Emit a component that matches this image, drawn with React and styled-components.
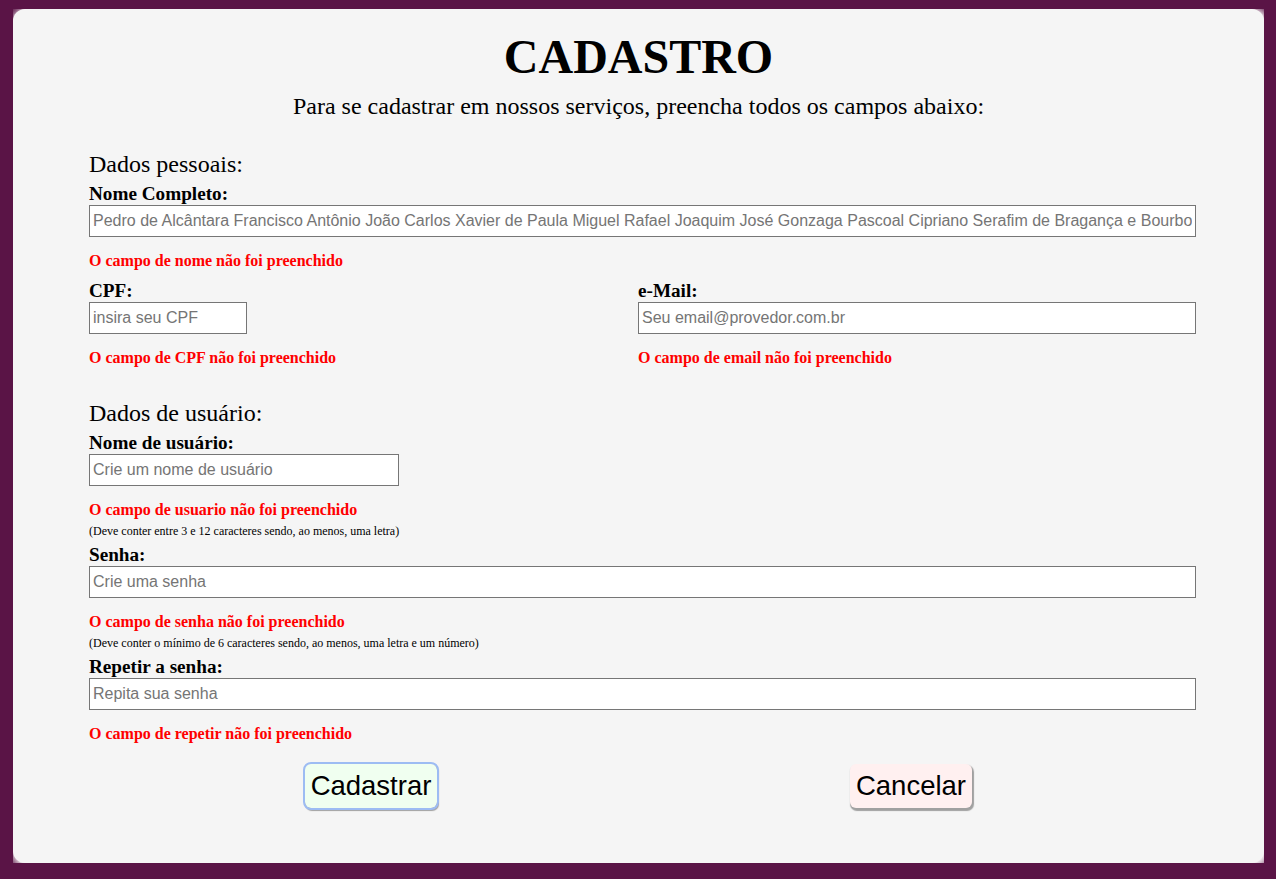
import styled, { createGlobalStyle } from "styled-components";

const GlobalStyle = createGlobalStyle`
  html, body {
    background-color: #5a1446;
  }
  body {
    margin: 9px 12px 16px 13px;
    font-family: "Liberation Serif", "Times New Roman", serif;
  }
`;

const Card = styled.main`
  box-sizing: border-box;
  height: 854px;
  padding: 21px 68px 0 68px;
  background-color: #f5f5f5;
  border-radius: 12px;
  box-shadow: 2px 2px 8px 3px #ffffff;
`;

const Title = styled.h1`
  margin: 0;
  font-size: 48px;
  line-height: 53px;
  font-weight: bold;
  text-align: center;
  color: black;
`;

const Subtitle = styled.p`
  margin: 10px 0 0 0;
  font-size: 24px;
  line-height: 27px;
  text-align: center;
  color: black;
`;

const Form = styled.form`
  padding-left: 8px;
`;

const Section = styled.h2`
  margin: ${(p) => p.$top}px 0 0 0;
  font-size: 24px;
  line-height: 27px;
  font-weight: normal;
  color: black;
`;

const Row = styled.div`
  display: grid;
  grid-template-columns: 549px 1fr;
`;

const Field = styled.div`
  display: flex;
  flex-direction: column;
  align-items: flex-start;
  margin-top: ${(p) => p.$top}px;
`;

const Label = styled.label`
  display: block;
  margin-bottom: 1px;
  font-size: 19.2px;
  line-height: 21px;
  font-weight: bold;
  color: black;
`;

const Input = styled.input`
  box-sizing: border-box;
  width: ${(p) => p.$width || "100%"};
  height: 32px;
  padding: 0 3px;
  border: 1px solid #767676;
  background: white;
  font-family: "Liberation Sans", Arial, sans-serif;
  font-size: 16px;
  color: black;
  outline: none;

  &::placeholder {
    color: #757575;
  }
`;

const Error = styled.span`
  margin-top: 15px;
  font-size: 16px;
  line-height: 18px;
  font-weight: bold;
  color: #ff0000;
`;

const Hint = styled.small`
  margin-top: 5px;
  font-size: 12px;
  line-height: 14px;
  color: black;
`;

const Buttons = styled.div`
  display: grid;
  grid-template-columns: 1fr 1fr;
  justify-items: center;
  padding: 0 15px 0 12px;
  margin-top: 21px;
`;

const Button = styled.button`
  height: 44px;
  padding: 0 6px;
  border: none;
  border-radius: 6px;
  background-color: ${(p) => p.$bg};
  box-shadow: 1px 2px 1px 1px #a0a0a0;
  font-family: "Liberation Sans", Arial, sans-serif;
  font-size: 27.5px;
  color: black;
  cursor: pointer;
  outline: ${(p) => (p.$focused ? "2px solid #9dbcf3" : "none")};
  outline-offset: 0;
`;

export default function App() {
  return (
    <>
      <GlobalStyle />
      <Card>
        <Title>CADASTRO</Title>
        <Subtitle>
          Para se cadastrar em nossos serviços, preencha todos os campos abaixo:
        </Subtitle>

        <Form onSubmit={(e) => e.preventDefault()}>
          <Section $top={31}>Dados pessoais:</Section>
          <Field $top={5}>
            <Label htmlFor="nome">Nome Completo:</Label>
            <Input
              id="nome"
              placeholder="Pedro de Alcântara Francisco Antônio João Carlos Xavier de Paula Miguel Rafael Joaquim José Gonzaga Pascoal Cipriano Serafim de Bragança e Bourbon"
            />
            <Error>O campo de nome não foi preenchido</Error>
          </Field>

          <Row>
            <Field $top={10}>
              <Label htmlFor="cpf">CPF:</Label>
              <Input id="cpf" $width="158px" placeholder="insira seu CPF" />
              <Error>O campo de CPF não foi preenchido</Error>
            </Field>
            <Field $top={10}>
              <Label htmlFor="email">e-Mail:</Label>
              <Input id="email" placeholder="Seu email@provedor.com.br" />
              <Error>O campo de email não foi preenchido</Error>
            </Field>
          </Row>

          <Section $top={33}>Dados de usuário:</Section>
          <Field $top={5}>
            <Label htmlFor="usuario">Nome de usuário:</Label>
            <Input id="usuario" $width="310px" placeholder="Crie um nome de usuário" />
            <Error>O campo de usuario não foi preenchido</Error>
            <Hint>(Deve conter entre 3 e 12 caracteres sendo, ao menos, uma letra)</Hint>
          </Field>
          <Field $top={6}>
            <Label htmlFor="senha">Senha:</Label>
            <Input id="senha" type="password" placeholder="Crie uma senha" />
            <Error>O campo de senha não foi preenchido</Error>
            <Hint>
              (Deve conter o mínimo de 6 caracteres sendo, ao menos, uma letra e um número)
            </Hint>
          </Field>
          <Field $top={6}>
            <Label htmlFor="repetir">Repetir a senha:</Label>
            <Input id="repetir" type="password" placeholder="Repita sua senha" />
            <Error>O campo de repetir não foi preenchido</Error>
          </Field>

          <Buttons>
            <Button type="submit" $bg="#f0fff0" $focused>
              Cadastrar
            </Button>
            <Button type="button" $bg="#fff0f0">
              Cancelar
            </Button>
          </Buttons>
        </Form>
      </Card>
    </>
  );
}
